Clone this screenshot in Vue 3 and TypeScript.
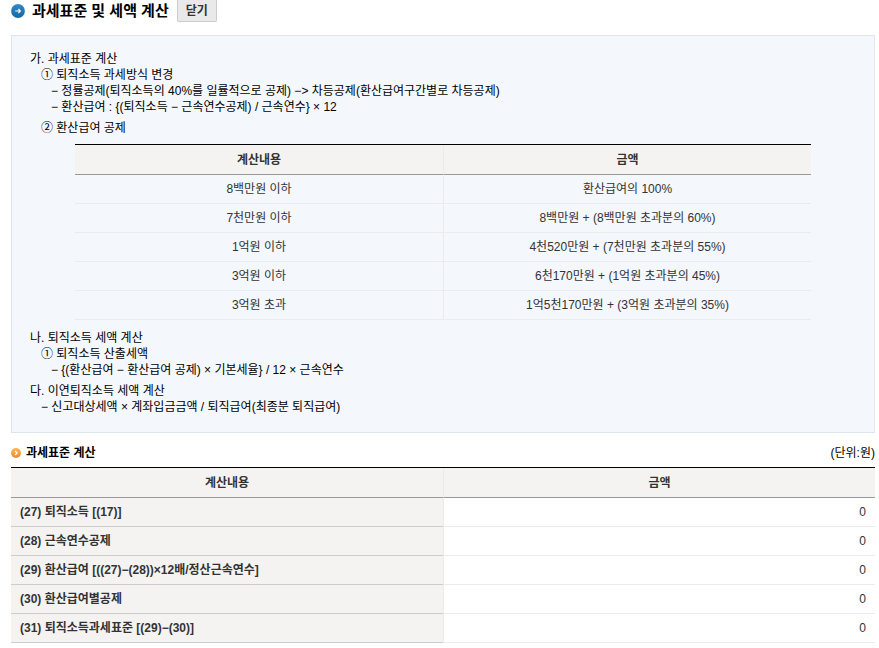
<script setup lang="ts">
interface DeductionRow {
  range: string
  amount: string
}

interface TaxRow {
  label: string
  value: number
}

const deductionRows: DeductionRow[] = [
  { range: '8백만원 이하', amount: '환산급여의 100%' },
  { range: '7천만원 이하', amount: '8백만원 + (8백만원 초과분의 60%)' },
  { range: '1억원 이하', amount: '4천520만원 + (7천만원 초과분의 55%)' },
  { range: '3억원 이하', amount: '6천170만원 + (1억원 초과분의 45%)' },
  { range: '3억원 초과', amount: '1억5천170만원 + (3억원 초과분의 35%)' },
]

const taxRows: TaxRow[] = [
  { label: '(27) 퇴직소득 [(17)]', value: 0 },
  { label: '(28) 근속연수공제', value: 0 },
  { label: '(29) 환산급여 [((27)−(28))×12배/정산근속연수]', value: 0 },
  { label: '(30) 환산급여별공제', value: 0 },
  { label: '(31) 퇴직소득과세표준 [(29)−(30)]', value: 0 },
]
</script>

<template>
  <main class="page">
    <header class="title-bar">
      <svg class="title-icon" viewBox="0 0 14 14" aria-hidden="true">
        <defs>
          <linearGradient id="blueDisc" x1="0" y1="0" x2="0" y2="1">
            <stop offset="0" stop-color="#3489c3" />
            <stop offset="1" stop-color="#1268a6" />
          </linearGradient>
        </defs>
        <circle cx="7" cy="7" r="6.9" fill="url(#blueDisc)" />
        <path d="M4.2 7H9.4M7.4 5L9.4 7L7.4 9" fill="none" stroke="#fff" stroke-width="1.1" />
      </svg>
      <h1>과세표준 및 세액 계산</h1>
      <button type="button" class="close">닫기</button>
    </header>

    <section class="guide">
      <p>가. 과세표준 계산</p>
      <p class="level-1">① 퇴직소득 과세방식 변경</p>
      <p class="level-2">− 정률공제(퇴직소득의 40%를 일률적으로 공제) −&gt; 차등공제(환산급여구간별로 차등공제)</p>
      <p class="level-2">− 환산급여 : {(퇴직소득 − 근속연수공제) / 근속연수} × 12</p>
      <p class="level-1 spaced">② 환산급여 공제</p>
      <table class="grid deduction">
        <thead>
          <tr>
            <th scope="col">계산내용</th>
            <th scope="col">금액</th>
          </tr>
        </thead>
        <tbody>
          <tr v-for="row in deductionRows" :key="row.range">
            <td>{{ row.range }}</td>
            <td>{{ row.amount }}</td>
          </tr>
        </tbody>
      </table>
      <p>나. 퇴직소득 세액 계산</p>
      <p class="level-1">① 퇴직소득 산출세액</p>
      <p class="level-2">− {(환산급여 − 환산급여 공제) × 기본세율} / 12 × 근속연수</p>
      <p class="spaced">다. 이연퇴직소득 세액 계산</p>
      <p class="level-1">− 신고대상세액 × 계좌입금금액 / 퇴직급여(최종분 퇴직급여)</p>
    </section>

    <section>
      <div class="section-head">
        <svg class="section-icon" viewBox="0 0 10 10" aria-hidden="true">
          <defs>
            <linearGradient id="orangeDisc" x1="0" y1="0" x2="0" y2="1">
              <stop offset="0" stop-color="#fbb850" />
              <stop offset="1" stop-color="#f08a28" />
            </linearGradient>
          </defs>
          <circle cx="5" cy="5" r="5" fill="url(#orangeDisc)" />
          <path d="M4.1 3L6.1 5L4.1 7" fill="none" stroke="#fff" stroke-width="1.2" />
        </svg>
        <h2>과세표준 계산</h2>
        <span class="unit">(단위:원)</span>
      </div>
      <table class="grid tax">
        <thead>
          <tr>
            <th scope="col">계산내용</th>
            <th scope="col">금액</th>
          </tr>
        </thead>
        <tbody>
          <tr v-for="row in taxRows" :key="row.label">
            <th scope="row">{{ row.label }}</th>
            <td>{{ row.value }}</td>
          </tr>
        </tbody>
      </table>
    </section>
  </main>
</template>

<style>
body {
  background: #fff;
}
</style>

<style scoped>
.page {
  padding: 0 4px 0 11px;
  font-family: "Liberation Sans", "Noto Sans CJK KR", sans-serif;
  font-size: 12px;
  line-height: 16px;
  color: #000;
}

h1,
h2,
p {
  margin: 0;
}

.title-bar {
  display: flex;
  align-items: center;
  height: 22px;
}

.title-icon {
  width: 14px;
  height: 14px;
  margin-right: 7px;
}

h1 {
  font-size: 15px;
  line-height: 20px;
  font-weight: 700;
}

.close {
  height: 22px;
  margin-left: 8px;
  padding: 0 8px;
  border: 1px solid #ccc;
  border-top: 0;
  border-radius: 0 0 2px 2px;
  background: #e9e9e9;
  color: #333;
  font: inherit;
  font-weight: 700;
}

.guide {
  margin-top: 13px;
  padding: 15px 18px 17px;
  border: 1px solid #dfe5ee;
  background: #f4f7fc;
}

.level-1 {
  padding-left: 11px;
}

.level-2 {
  padding-left: 21px;
}

.spaced {
  margin-top: 5px;
}

.grid {
  width: 100%;
  table-layout: fixed;
  border-collapse: separate;
  border-spacing: 0;
  border-top: 1px solid #000;
  color: #333;
}

.grid th,
.grid td {
  width: 50%;
  box-sizing: border-box;
  height: 29px;
  padding: 0 9px;
  border-bottom: 1px solid #ebebeb;
  text-align: center;
}

.grid thead th {
  height: 30px;
  background: #f5f3f1;
  border-bottom-color: #999;
}

.grid thead th + th,
.grid td + td {
  border-left: 1px solid #ebebeb;
}

.grid.deduction {
  width: calc(100% - 90px);
  margin: 8px 45px 10px;
}

.grid.tax tbody th {
  background: #f5f3f1;
  border-bottom-color: #ccc;
  text-align: left;
}

.grid.tax tbody td {
  border-left: 1px solid #ebebeb;
  text-align: right;
}

.section-head {
  display: flex;
  align-items: center;
  padding: 12px 0 6px;
}

.section-icon {
  width: 10px;
  height: 10px;
  margin-right: 5px;
}

h2 {
  font-size: 12px;
  line-height: 16px;
  font-weight: 700;
}

.unit {
  margin-left: auto;
}
</style>
